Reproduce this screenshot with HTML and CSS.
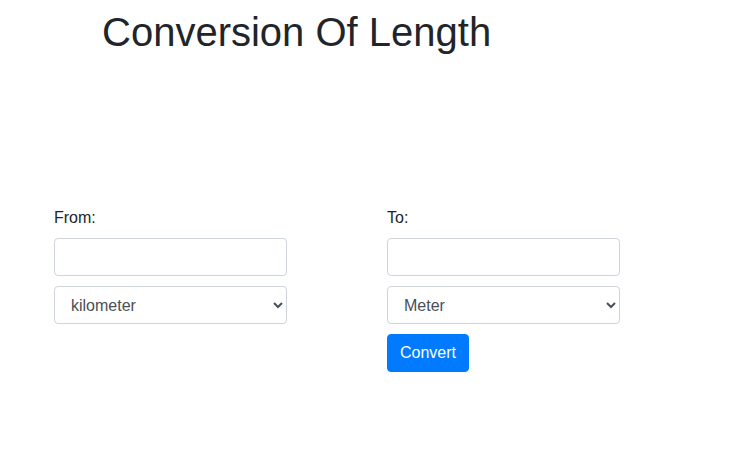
FILE: index.html
```html
<!DOCTYPE html>
<html>
<head>
<meta charset="utf-8">
<link rel="stylesheet" href="styles.css">
</head>
<body>
<h1 class="title">Conversion Of Length</h1>
<div class="converter">
  <div class="col">
    <label class="label">From:</label>
    <input class="field" type="text">
    <select class="field select">
      <option>kilometer</option>
    </select>
  </div>
  <div class="col">
    <label class="label">To:</label>
    <input class="field" type="text">
    <select class="field select">
      <option>Meter</option>
    </select>
    <button class="btn">Convert</button>
  </div>
</div>
</body>
</html>
```
FILE: styles.css
```css
* { box-sizing: border-box; }
body {
  margin: 0;
  font-family: "Liberation Sans", Arial, sans-serif;
  font-size: 16px;
  line-height: 1.5;
  color: #212529;
  background: #fff;
}
.title {
  margin: 8px 0 0 102px;
  font-size: 40px;
  font-weight: 400;
  line-height: 1.2;
}
.converter {
  display: flex;
  gap: 100px;
  padding: 150px 0 0 54px;
}
.col {
  width: 233px;
  display: flex;
  flex-direction: column;
  align-items: flex-start;
}
.label {
  display: block;
  margin-bottom: 8px;
  color: #212529;
}
.field {
  display: block;
  width: 233px;
  height: 38px;
  padding: 6px 12px;
  margin: 0 0 10px;
  font-family: inherit;
  font-size: 16px;
  color: #495057;
  background: #fff;
  border: 1px solid #ced4da;
  border-radius: 4px;
}
.select {
  padding-left: 12px;
}
.btn {
  display: inline-block;
  height: 38px;
  padding: 6px 12px;
  font-family: inherit;
  font-size: 16px;
  line-height: 1.5;
  color: #fff;
  background: #007bff;
  border: 1px solid #007bff;
  border-radius: 4px;
}
```
